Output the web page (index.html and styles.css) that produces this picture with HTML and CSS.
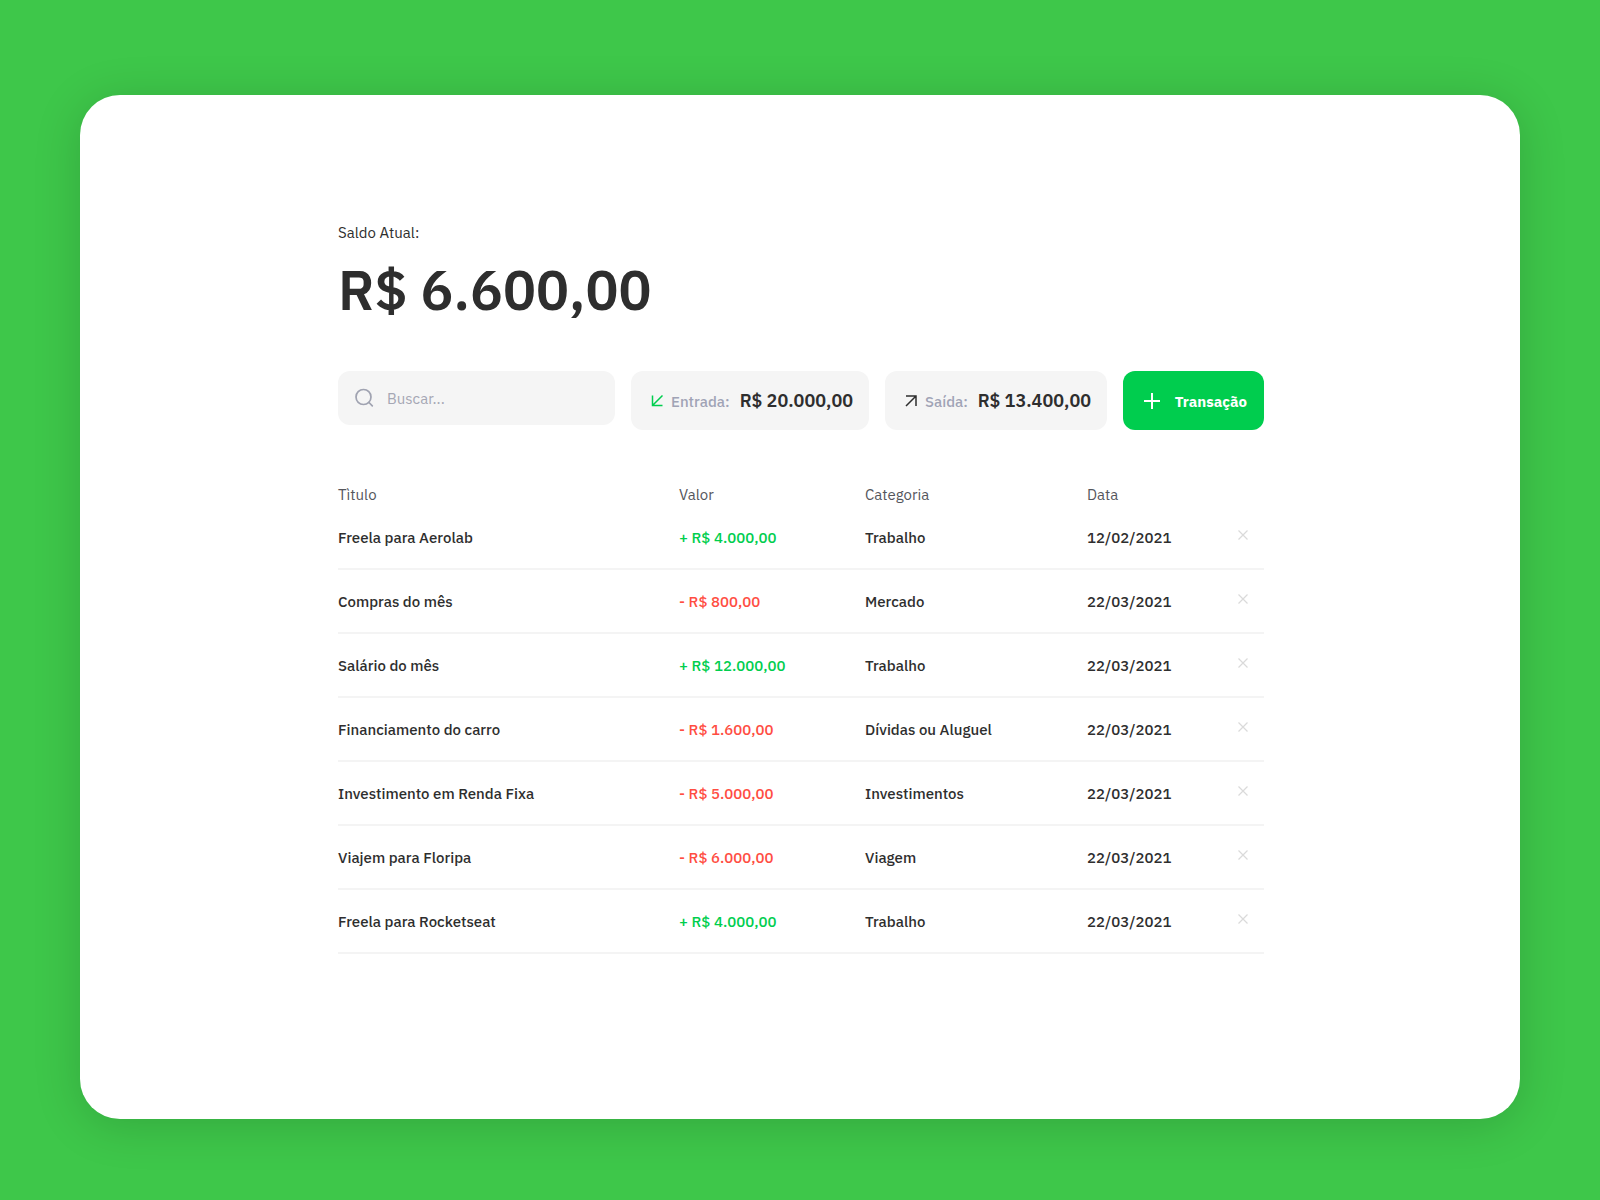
FILE: index.html
```html
<!DOCTYPE html>
<html lang="pt-BR">
<head>
  <meta charset="utf-8">
  <meta name="viewport" content="width=device-width, initial-scale=1">
  <title>Saldo Atual</title>
  <link rel="stylesheet" href="styles.css">
</head>
<body>
  <svg class="sprite" aria-hidden="true">
    <symbol id="close" viewBox="0 0 10 10"><path d="M.5 .5l9 9M9.500 .5l-9 9" fill="none" stroke="currentColor" stroke-width="1.200"/></symbol>
  </svg>
  <main class="card">
    <div class="content">
      <header class="balance">
        <p class="balance-label">Saldo Atual:</p>
        <h1 class="balance-value">R$ 6.600,00</h1>
      </header>

      <div class="toolbar">
        <label class="search">
          <svg class="search-icon" viewBox="0 0 20 20" fill="none" stroke="currentColor" stroke-width="1.700" stroke-linecap="round" aria-hidden="true"><circle cx="9.500" cy="9" r="7.500"/><path d="M15 14.500l3.300 3.300"/></svg>
          <input class="search-input" type="text" placeholder="Buscar..." aria-label="Buscar">
        </label>
        <div class="summary summary-in">
          <svg class="arrow arrow-in" viewBox="0 0 12 12" fill="none" stroke="currentColor" stroke-width="1.500" aria-hidden="true"><path d="M11.500 .5L1.500 10.500M1.500 0.500v10H11.500"/></svg>
          <span class="summary-label">Entrada:</span>
          <strong class="summary-value">R$ 20.000,00</strong>
        </div>
        <div class="summary summary-out">
          <svg class="arrow" viewBox="0 0 12 12" fill="none" stroke="currentColor" stroke-width="1.500" aria-hidden="true"><path d="M1 11L11 1M1 1h10v10"/></svg>
          <span class="summary-label">Saída:</span>
          <strong class="summary-value">R$ 13.400,00</strong>
        </div>
        <button class="add" type="button">
          <svg class="plus" viewBox="0 0 16 16" fill="none" stroke="currentColor" stroke-width="2" aria-hidden="true"><path d="M8 0v16M0 8h16"/></svg>
          <span class="add-label">Transação</span>
        </button>
      </div>

      <table class="transactions">
        <colgroup>
          <col>
          <col class="col-value">
          <col class="col-category">
          <col class="col-date">
          <col class="col-remove">
        </colgroup>
        <thead>
          <tr><th scope="col">Tìtulo</th><th scope="col">Valor</th><th scope="col">Categoria</th><th scope="col">Data</th><td></td></tr>
        </thead>
        <tbody>
          <tr><td>Freela para Aerolab</td><td class="income">+ R$ 4.000,00</td><td>Trabalho</td><td>12/02/2021</td><td><button class="remove" type="button" aria-label="Remover"><svg class="close"><use href="#close"/></svg></button></td></tr>
          <tr><td>Compras do mês</td><td class="expense">- R$ 800,00</td><td>Mercado</td><td>22/03/2021</td><td><button class="remove" type="button" aria-label="Remover"><svg class="close"><use href="#close"/></svg></button></td></tr>
          <tr><td>Salário do mês</td><td class="income">+ R$ 12.000,00</td><td>Trabalho</td><td>22/03/2021</td><td><button class="remove" type="button" aria-label="Remover"><svg class="close"><use href="#close"/></svg></button></td></tr>
          <tr><td>Financiamento do carro</td><td class="expense">- R$ 1.600,00</td><td>Dívidas ou Aluguel</td><td>22/03/2021</td><td><button class="remove" type="button" aria-label="Remover"><svg class="close"><use href="#close"/></svg></button></td></tr>
          <tr><td>Investimento em Renda Fixa</td><td class="expense">- R$ 5.000,00</td><td>Investimentos</td><td>22/03/2021</td><td><button class="remove" type="button" aria-label="Remover"><svg class="close"><use href="#close"/></svg></button></td></tr>
          <tr><td>Viajem para Floripa</td><td class="expense">- R$ 6.000,00</td><td>Viagem</td><td>22/03/2021</td><td><button class="remove" type="button" aria-label="Remover"><svg class="close"><use href="#close"/></svg></button></td></tr>
          <tr><td>Freela para Rocketseat</td><td class="income">+ R$ 4.000,00</td><td>Trabalho</td><td>22/03/2021</td><td><button class="remove" type="button" aria-label="Remover"><svg class="close"><use href="#close"/></svg></button></td></tr>
        </tbody>
      </table>
    </div>
  </main>
</body>
</html>
```
FILE: styles.css
```css
* { box-sizing: border-box; }

body {
  margin: 0;
  min-height: 100vh;
  padding: 95px 80px 81px;
  background: #3ec74a;
  color: #2e2e2e;
  font: 400 15px/24px "IBM Plex Sans", "Noto Sans", sans-serif;
}

.sprite { display: none; }

.card {
  padding: 126px 48px 165px 50px;
  border-radius: 40px;
  background: #fff;
  box-shadow: 0 6px 48px rgba(0, 0, 0, 0.16);
}

.content {
  max-width: 926px;
  margin: 0 auto;
}

.balance-label { margin: 0; }

.balance-value {
  margin: 9px 0 45px;
  font-size: 55px;
  font-weight: 600;
  line-height: 72px;
}

.toolbar {
  display: flex;
  flex-wrap: wrap;
  align-items: flex-start;
  gap: 16px;
  margin-bottom: 52px;
}

.search,
.summary,
.add {
  display: flex;
  align-items: center;
  border-radius: 12px;
  background: #f5f5f5;
}

.search {
  flex: 1;
  gap: 13px;
  min-width: 200px;
  height: 54px;
  padding: 0 16px;
  color: #a0a3b1;
}

.search-icon { flex: none; width: 20px; height: 20px; }

.search-input {
  width: 100%;
  min-width: 0;
  padding: 2px 0 0;
  border: 0;
  outline: 0;
  background: none;
  color: #2e2e2e;
  font: inherit;
}

.search-input::placeholder { color: #a5a7b4; opacity: 1; }

.summary {
  height: 59px;
  padding: 0 16px 0 20px;
}

.summary-in { width: 238px; }
.summary-out { width: 222px; }

.arrow { flex: none; width: 12px; height: 12px; margin-right: 8px; }
.arrow-in { color: #00ce4e; }

.summary-label,
.add-label { padding-top: 2px; }

.summary-label { color: #a0a3b5; font-weight: 500; }

.summary-value {
  margin-left: auto;
  font-size: 18px;
  font-weight: 600;
  white-space: nowrap;
}

.add {
  justify-content: space-between;
  width: 141px;
  height: 59px;
  padding: 0 17px 0 21px;
  border: 0;
  background: #00cd4e;
  color: #fff;
  font: inherit;
  font-weight: 700;
  cursor: pointer;
}

.plus { flex: none; width: 16px; height: 16px; }

.transactions {
  width: 100%;
  border-spacing: 0;
  table-layout: fixed;
}

.col-value { width: 186px; }
.col-category { width: 222px; }
.col-date { width: 137px; }
.col-remove { width: 40px; }

.transactions th,
.transactions td {
  padding: 0;
  text-align: left;
}

.transactions th {
  padding-top: 2px;
  color: #55565c;
  font-weight: 400;
  line-height: 22px;
}

.transactions tbody td {
  height: 64px;
  padding-top: 2px;
  border-bottom: 2px solid #f4f4f4;
  font-weight: 500;
}

.transactions .income { color: #00ce4e; }
.transactions .expense { color: #ff4d42; }

.remove {
  display: flex;
  margin-left: auto;
  padding: 0 16px 6px 0;
  border: 0;
  background: none;
  color: #dadada;
  cursor: pointer;
}

.close { width: 10px; height: 10px; }
```
